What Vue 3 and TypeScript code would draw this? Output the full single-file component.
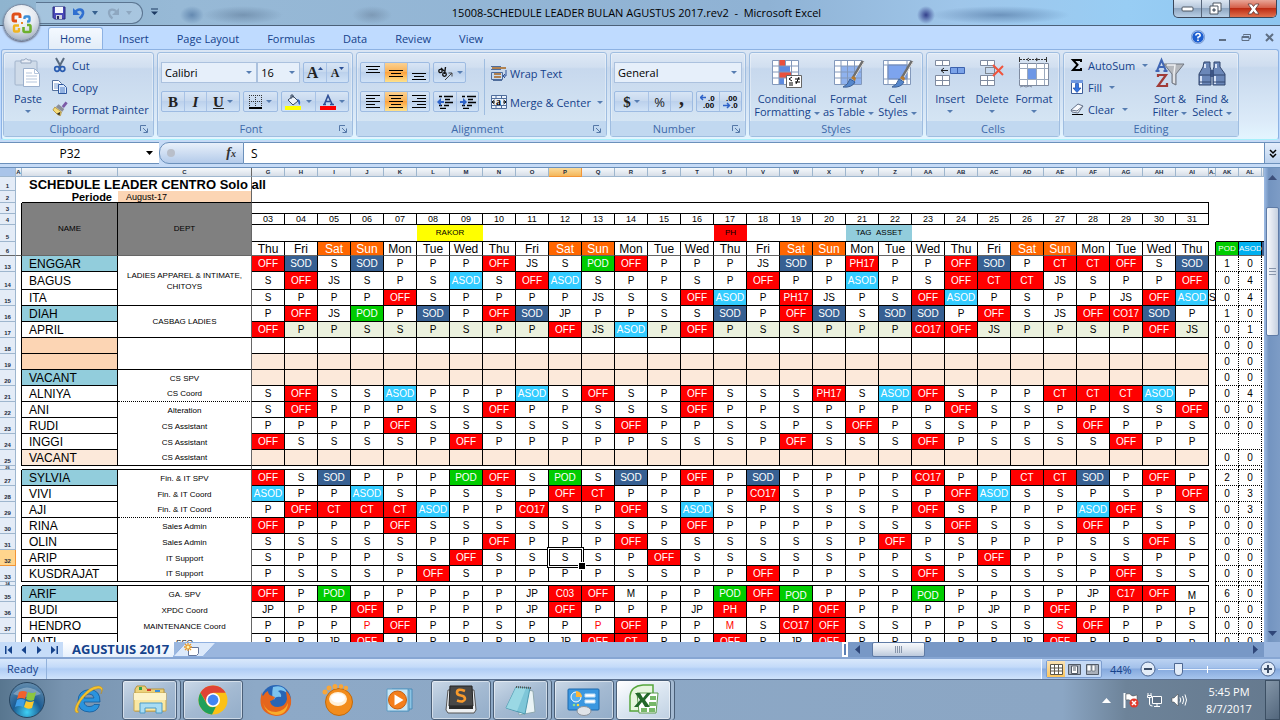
<script setup lang="ts">
import { ref } from 'vue'

interface Dept { text: string; span?: number; line?: 'dotted' | 'solid' }
interface Row {
  n: number
  name?: string
  tone?: 'blue' | 'peach' | 'light' | ''
  dept?: Dept | null
  cells: string
  fill?: 'green' | 'light' | ''
  pod?: string
  asod?: string
  gap?: boolean
  tall?: boolean
}

const columns: string[] = 'G H I J K L M N O P Q R S T U V W X Y Z AA AB AC AD AE AF AG AH AI'.split(' ')
const weekdays: string[] = ['Thu', 'Fri', 'Sat', 'Sun', 'Mon', 'Tue', 'Wed']
const days = columns.map((col, i) => ({
  col,
  date: String(i + 3).padStart(2, '0'),
  day: weekdays[i % 7],
}))
const tabs: string[] = ['Home', 'Insert', 'Page Layout', 'Formulas', 'Data', 'Review', 'View']

const rows: Row[] = [
  { n: 13, name: 'ENGGAR', tone: 'blue', dept: { text: 'LADIES APPAREL & INTIMATE, CHITOYS', span: 3, line: 'solid' }, cells: 'OFF SOD S SOD P P P OFF JS S POD OFF P P P JS SOD P PH17 P P OFF SOD P CT CT OFF S SOD', pod: '1', asod: '0' },
  { n: 14, name: 'BAGUS', dept: null, tall: true, cells: 'S OFF JS S P S ASOD S OFF ASOD S P P S P OFF P P ASOD P S OFF CT CT JS S P P OFF', pod: '0', asod: '4' },
  { n: 15, name: 'ITA', dept: null, cells: 'S P P P OFF S P P P P JS S S OFF ASOD P PH17 JS P S OFF ASOD P S P P JS OFF ASOD', pod: '0', asod: '4' },
  { n: 16, name: 'DIAH', tone: 'blue', dept: { text: 'CASBAG LADIES', span: 2, line: 'solid' }, cells: 'P OFF JS POD P SOD P OFF SOD JP P P S S SOD P OFF SOD S SOD SOD P OFF S JS OFF CO17 SOD P', pod: '1', asod: '0' },
  { n: 17, name: 'APRIL', dept: null, fill: 'green', cells: 'OFF P P S S P S P P OFF JS ASOD P OFF P S S P P P CO17 OFF JS P P S P OFF JS', pod: '0', asod: '1' },
  { n: 18, name: '', tone: 'peach', dept: { text: '', span: 2, line: 'solid' }, cells: '', pod: '0', asod: '0' },
  { n: 19, name: '', tone: 'peach', dept: null, fill: 'light', cells: '', pod: '0', asod: '0' },
  { n: 20, name: 'VACANT', tone: 'blue', dept: { text: 'CS SPV' }, fill: 'light', cells: '', pod: '0', asod: '0' },
  { n: 21, name: 'ALNIYA', dept: { text: 'CS Coord', line: 'dotted' }, cells: 'S OFF S S ASOD P P P ASOD S OFF S P OFF S S S PH17 S ASOD OFF S P P CT CT CT ASOD P', pod: '0', asod: '4' },
  { n: 22, name: 'ANI', dept: { text: 'Alteration' }, cells: 'S OFF P P P S S OFF P P S S S OFF P P S P P P P OFF S S P P S S OFF', pod: '0', asod: '0' },
  { n: 23, name: 'RUDI', dept: { text: 'CS Assistant' }, cells: 'P P P P OFF S S S S S S OFF P P S S P S OFF P S S P P S OFF P P S', pod: '0', asod: '0' },
  { n: 24, name: 'INGGI', dept: { text: 'CS Assistant' }, cells: 'OFF S S S S P OFF P P P P P S S S P OFF S S S OFF P S S S S OFF P P' },
  { n: 25, name: 'VACANT', tone: 'light', dept: { text: 'CS Assistant', line: 'solid' }, fill: 'light', cells: '', pod: '0', asod: '0' },
  { n: 26, gap: true, cells: '' },
  { n: 27, name: 'SYLVIA', tone: 'blue', dept: { text: 'Fin. & IT SPV' }, cells: 'OFF S SOD P P P POD OFF S POD S SOD P OFF P SOD P P P P CO17 P P CT CT SOD P OFF P', pod: '2', asod: '0' },
  { n: 28, name: 'VIVI', dept: { text: 'Fin. & IT Coord' }, cells: 'ASOD P P ASOD S P S S P OFF CT P P P P CO17 S P P S P OFF ASOD S S P S P OFF', pod: '0', asod: '3' },
  { n: 29, name: 'AJI', dept: { text: 'Fin. & IT Coord', line: 'dotted' }, cells: 'P OFF CT CT CT ASOD P P CO17 S P OFF S ASOD S P S S S P OFF S P P P ASOD OFF S S', pod: '0', asod: '3' },
  { n: 30, name: 'RINA', dept: { text: 'Sales Admin' }, cells: 'OFF P P P OFF S S S S S S S P OFF P P P P S S S OFF S S S OFF P S P', pod: '0', asod: '0' },
  { n: 31, name: 'OLIN', dept: { text: 'Sales Admin' }, cells: 'S S S S S P P OFF P P P OFF S S S S S S P OFF P S P P P S S OFF S', pod: '0', asod: '0' },
  { n: 32, name: 'ARIP', dept: { text: 'IT Support' }, cells: 'S P P P S S OFF S S S S P OFF S S S S S P P S P OFF P P S S P P', pod: '0', asod: '0' },
  { n: 33, name: 'KUSDRAJAT', dept: { text: 'IT Support', line: 'solid' }, cells: 'P S S S P OFF S P P P P S S P P OFF P P S S OFF S S S S P OFF S S', pod: '0', asod: '0' },
  { n: 34, gap: true, cells: '' },
  { n: 35, name: 'ARIF', tone: 'blue', dept: { text: 'GA. SPV' }, cells: 'OFF P POD P_ P P P_ P JP C03 OFF M P_ P POD OFF POD_ P P P POD_ P P_ S P JP C17 OFF M_', pod: '6', asod: '0' },
  { n: 36, name: 'BUDI', dept: { text: 'XPDC Coord' }, cells: 'JP P P OFF P P P P JP OFF P P P JP PH P P OFF P P P P JP P OFF P P P P_', pod: '0', asod: '0' },
  { n: 37, name: 'HENDRO', dept: { text: 'MAINTENANCE Coord' }, cells: 'P P P P* OFF P P S P P P* OFF P P M* S CO17 OFF S S P P S S S* OFF P P S', pod: '0', asod: '0' },
  { n: 38, name: 'ANTI', dept: { text: 'SSO' }, cells: 'P P JP OFF P P P P P JP OFF CT P P OFF P JP OFF P P P P P JP OFF P P P P_', pod: '0', asod: '0' },
]

function shifts(row: Row) {
  const codes = row.cells ? row.cells.split(' ') : columns.map(() => '')
  return codes.map((code, i) => {
    const text = code.replace(/[_*]/, '')
    let kind = ''
    if (/^(OFF|CT|PH|C\d|CO)/.test(text)) kind = 'off'
    else if (text === 'SOD') kind = 'sod'
    else if (text === 'ASOD') kind = 'asod'
    else if (text === 'POD') kind = 'pod'
    else if (row.fill) kind = 'fill-' + row.fill
    return {
      text,
      kind,
      low: code.endsWith('_'),
      red: code.endsWith('*'),
      selected: row.n === 32 && columns[i] === 'P',
    }
  })
}

const fontName = ref('Calibri')
const fontSize = ref('16')
const numberFormat = ref('General')
const formula = ref('S')
const zoom = ref(44)
</script>

<template>
  <div class="app">
    <header class="titlebar">
      <div class="qat">
        <button aria-label="Save"><svg width="14" height="14" viewBox="0 0 14 14"><path d="M1 1h12v12H2.500L1 11.500z" fill="#4a49b8" stroke="#2b2a7c" /><path d="M3 1h8v6H3z" fill="#f3f5fd" /><path d="M4 9h6v4H4z" fill="#cfd3dc" /><path d="M5 10h2v3H5z" fill="#26265e" /></svg></button>
        <button aria-label="Undo"><svg width="14" height="14" viewBox="0 0 14 14"><path d="M3 6.500C6 2 11.500 3 11 7.500c-.3 2-1.500 3.500-3.500 5" fill="none" stroke="#2f6fd0" stroke-width="2.600" /><path d="M1 2v7h7z" fill="#2f6fd0" /></svg></button>
        <svg class="tri" width="6" height="4" viewBox="0 0 6 4"><path d="M0 0h6L3 4z" fill="#37608f" /></svg>
        <button aria-label="Redo"><svg width="14" height="14" viewBox="0 0 14 14"><path d="M11 6.500C8 2 2.500 3 3 7.500c.3 2 1.500 3.500 3.500 5" fill="none" stroke="#8ea7c0" stroke-width="2.200" /><path d="M13 2v7H6z" fill="#8ea7c0" /></svg></button>
        <svg class="tri" width="6" height="4" viewBox="0 0 6 4"><path d="M0 0h6L3 4z" fill="#8ea7c0" /></svg>
      </div>
      <button class="qat-more" aria-label="Customize Quick Access Toolbar"><svg width="7" height="8" viewBox="0 0 7 8"><path d="M0 1h7" stroke="#1c3a63" /><path d="M0 3.500h7L3.500 7z" fill="#1c3a63" /></svg></button>
      <h1>15008-SCHEDULE LEADER BULAN AGUSTUS 2017.rev2 &nbsp;-&nbsp; Microsoft Excel</h1>
      <div class="winbtns">
        <button aria-label="Minimize"><svg width="14" height="6" viewBox="0 0 14 6"><rect x="1" y="1" width="11" height="4" rx="1" fill="#fff" stroke="#4c5663" /></svg></button>
        <button aria-label="Restore"><svg width="13" height="13" viewBox="0 0 13 13"><path d="M4 1h8v8H4z" fill="#fff" stroke="#4c5663" /><path d="M1 4h8v8H1z" fill="#fff" stroke="#4c5663" /><path d="M4 7h2v2H4z" fill="#8b9bb0" stroke="#4c5663" /></svg></button>
        <button class="close" aria-label="Close"><svg width="13" height="12" viewBox="0 0 13 12"><path d="M1 1h3.500l2 2.500L8.500 1H12L8.500 6 12 11H8.500l-2-2.500-2 2.500H1l3.500-5z" fill="#fff" stroke="#5a3a3a" stroke-width=".8" /></svg></button>
      </div>
      <button class="orb" aria-label="Office Button">
        <svg width="24" height="24" viewBox="0 0 24 24" fill="none" stroke-width="3">
          <path d="M10 7V4.500Q10 3 8.500 3H5Q3 3 3 5v3.500Q3 10 4.500 10H7" stroke="#e0501a" />
          <path d="M14.500 8V6.500q0-1 1-1h3q1 0 1 1v3q0 1-1 1H17" stroke="#3c8fd8" stroke-width="2.400" />
          <path d="M9 14.500H5q-1 0-1 1v4q0 1 1 1h3q1 0 1-1V17" stroke="#f0b420" stroke-width="2.400" />
          <path d="M13.500 16v3.500q0 1.500 1.500 1.500h4q1.500 0 1.500-1.500v-4q0-1.500-1.500-1.500H17" stroke="#6cb02c" stroke-width="2.600" />
          <path d="M11 11h2v2h-2z" fill="#e8882a" /></svg>
      </button>
    </header>

    <nav class="tabs">
      <button v-for="(tab, i) in tabs" :key="tab" :class="{ active: i === 0 }">{{ tab }}</button>
      <div class="mdi">
        <button aria-label="Help"><svg width="14" height="14" viewBox="0 0 14 14"><circle cx="7" cy="7" r="6.300" fill="#1d5fd0" stroke="#eaf3ff" /><circle cx="7" cy="7" r="6.700" fill="none" stroke="#4a74b8" stroke-width=".6" /><path d="M4.800 5.500Q5 3.500 7 3.500t2.200 1.700Q9.200 6.500 7 7.300v1.200M7 9.500v1.500" fill="none" stroke="#fff" stroke-width="1.600" /></svg></button>
        <button aria-label="Minimize workbook"><svg width="8" height="9" viewBox="0 0 8 9"><path d="M0 7h7" stroke="#5f6f84" stroke-width="2" /></svg></button>
        <button aria-label="Restore workbook"><svg width="10" height="9" viewBox="0 0 10 9"><path d="M2.500 2.500v-1h7v4H8M1 3.500h7v4H1z" fill="none" stroke="#5f6f84" /><path d="M1 4h7" stroke="#5f6f84" stroke-width="2" /></svg></button>
        <button aria-label="Close workbook"><svg width="9" height="9" viewBox="0 0 9 9"><path d="M1 1l7 7M8 1L1 8" stroke="#5f6f84" stroke-width="2" /></svg></button>
      </div>
    </nav>

    <section class="ribbon" aria-label="Ribbon">
      <div class="group g-clip">
        <div class="gbody">
          <button class="big paste">
            <svg width="28" height="32" viewBox="0 0 28 32"><rect x="1" y="4" width="22" height="24" rx="1" fill="#cfdbe9" stroke="#a2b4cc" /><path d="M7 6V3h3q2-3 4 0h3v3z" fill="#e9eef6" stroke="#93a5be" /><path d="M9.500 11.500h11l5 5v13h-16z" fill="#fff" stroke="#9bb0cd" /><path d="M20.500 11.500v5h5M12 19h11M12 22h11M12 25h11M12 16h6" fill="none" stroke="#b4c5dc" /></svg>
            <span>Paste</span><i class="dd"></i>
          </button>
          <div class="stack">
            <button class="small"><svg width="16" height="16" viewBox="0 0 16 16"><path d="M4 1l5 9M12 1L7 10" stroke="#596b80" stroke-width="2" /><circle cx="5" cy="12" r="2.300" fill="none" stroke="#2a5cb0" stroke-width="1.700" /><circle cx="10.500" cy="12" r="2.300" fill="none" stroke="#2a5cb0" stroke-width="1.700" /></svg>Cut</button>
            <button class="small"><svg width="16" height="16" viewBox="0 0 16 16"><path d="M.5 1.500h6l3 3v7h-9z" fill="#fff" stroke="#54719e" /><path d="M2 5h5M2 7h5M2 9h5" stroke="#7d9fd2" /><path d="M6.500 5.500h5l3 3v6h-8z" fill="#dce9fb" stroke="#2e58a0" /><path d="M8 9h5M8 11h5M8 13h5" stroke="#4b7cc8" /></svg>Copy</button>
            <button class="small"><svg width="16" height="16" viewBox="0 0 17 16"><path d="M15.500 1l-4 5" stroke="#7b5aa6" stroke-width="3" /><path d="M7 3l6 5-2 3-7-5z" fill="#8b8f9a" /><path d="M3 6l7 5-1 4-3-1-5-5z" fill="#f5dc7a" stroke="#a8862e" stroke-width=".8" /><path d="M9 11l-1 4-3-2z" fill="#3c3524" /></svg>Format Painter</button>
          </div>
        </div>
        <div class="glabel"><span>Clipboard</span><svg width="8" height="8" viewBox="0 0 8 8"><path d="M.5 6V.5H6M3 3l4 4M7.500 3.500v4h-4" fill="none" stroke="#5578a8" /></svg></div>
      </div>

      <div class="group g-font">
        <div class="gbody rows2">
          <div class="line">
            <label class="combo c-font"><select v-model="fontName" aria-label="Font"><option>Calibri</option></select><i class="dd"></i></label>
            <label class="combo c-size"><select v-model="fontSize" aria-label="Font size"><option>16</option></select><i class="dd"></i></label>
            <div class="bar push">
              <button class="w22" aria-label="Grow Font"><b class="serif s16">A</b><svg class="sup" width="5" height="3" viewBox="0 0 5 3"><path d="M0 3h5L2.500 0z" fill="#2b4f96" /></svg></button>
              <button class="w22" aria-label="Shrink Font"><b class="serif s12">A</b><svg class="sup" width="5" height="3" viewBox="0 0 5 3"><path d="M0 0h5L2.500 3z" fill="#2b4f96" /></svg></button>
            </div>
          </div>
          <div class="line spread">
            <div class="bar">
              <button class="w22"><b class="serif s14">B</b></button>
              <button class="w22"><b class="serif s14"><em>I</em></b></button>
              <button class="w34"><b class="serif s14"><u>U</u></b><i class="dd"></i></button>
            </div>
            <div class="bar">
              <button class="w34" aria-label="Borders"><svg width="14" height="14" viewBox="0 0 14 14"><path d="M.5 0v12M6.500 0v12M12.500 0v12M0 .5h13M0 6.500h13" stroke="#333" stroke-dasharray="1 1" /><path d="M0 13h13" stroke="#000" stroke-width="2" /></svg><i class="dd"></i></button>
            </div>
            <div class="bar">
              <button class="w34" aria-label="Fill Color"><svg width="18" height="16" viewBox="0 0 18 16"><path d="M3 6l5-4 5 5-5 4z" fill="#eef4fc" stroke="#3a4a63" /><path d="M6 5V1h2v3" fill="none" stroke="#3a4a63" /><path d="M12 5q4 0 3 6-2-1-2-4z" fill="#2f62c0" /><path d="M0 12h16v4H0z" fill="#ff0" /></svg><i class="dd"></i></button>
              <button class="w34" aria-label="Font Color"><svg width="16" height="16" viewBox="0 0 16 16"><path d="M3 10.500h3M10 10.500h4M4.500 10L8 1.500l4 8.500M5.500 7.500h4.500" fill="none" stroke="#2f4f95" stroke-width="1.600" /><path d="M0 12h16v4H0z" fill="#f00" /></svg><i class="dd"></i></button>
            </div>
          </div>
        </div>
        <div class="glabel"><span>Font</span><svg width="8" height="8" viewBox="0 0 8 8"><path d="M.5 6V.5H6M3 3l4 4M7.500 3.500v4h-4" fill="none" stroke="#5578a8" /></svg></div>
      </div>

      <div class="group g-align">
        <div class="gbody">
          <div class="half">
            <div class="line">
              <div class="bar">
                <button class="w23" aria-label="Top Align"><svg width="14" height="14" viewBox="0 0 14 14"><path d="M0 .5h14M2 3.500h10M0 6.500h14" stroke="#000" /></svg></button>
                <button class="w23 on" aria-label="Middle Align"><svg width="14" height="14" viewBox="0 0 14 14"><path d="M0 4.500h14M2 7.500h10M0 10.500h14" stroke="#000" /></svg></button>
                <button class="w22" aria-label="Bottom Align"><svg width="14" height="14" viewBox="0 0 14 14"><path d="M0 7.500h14M2 10.500h10M0 13.500h14" stroke="#000" /></svg></button>
              </div>
              <div class="bar"><button class="w31" aria-label="Orientation"><svg width="17" height="16" viewBox="0 0 17 16"><circle cx="3.500" cy="6" r="1.700" fill="none" stroke="#111" stroke-width="1.300" /><path d="M4 3l3 3M8.500 2l-1 7" stroke="#111" stroke-width="1.400" /><circle cx="7.500" cy="9.500" r="1.800" fill="none" stroke="#111" stroke-width="1.300" /><path d="M8 15l7-7M15 11.500V8h-3.500" fill="none" stroke="#444" /></svg><i class="dd"></i></button></div>
            </div>
            <div class="line">
              <div class="bar">
                <button class="w23" aria-label="Align Left"><svg width="14" height="13" viewBox="0 0 14 13"><path d="M0 .5h14M0 3.500h9M0 6.500h14M0 9.500h9M0 12.500h14" stroke="#000" /></svg></button>
                <button class="w23 on" aria-label="Center"><svg width="14" height="13" viewBox="0 0 14 13"><path d="M0 .5h14M2 3.500h10M0 6.500h14M2 9.500h10M0 12.500h14" stroke="#000" /></svg></button>
                <button class="w22" aria-label="Align Right"><svg width="14" height="13" viewBox="0 0 14 13"><path d="M0 .5h14M5 3.500h9M0 6.500h14M5 9.500h9M0 12.500h14" stroke="#000" /></svg></button>
              </div>
              <div class="bar">
                <button class="w22" aria-label="Decrease Indent"><svg width="16" height="14" viewBox="0 0 16 14"><path d="M7 1.500h9M8 4.500h5M8 7.500h8M7 10.500h5M2 1.500h3M2 10.500h3M3 13.500h6" stroke="#000" stroke-width="1.500" /><path d="M7 6H4V3L0 7l4 4V8h3z" fill="#2e62c8" /></svg></button>
                <button class="w22" aria-label="Increase Indent"><svg width="16" height="14" viewBox="0 0 16 14"><path d="M7 1.500h9M8 4.500h5M8 7.500h8M7 10.500h5M2 1.500h3M2 10.500h3M3 13.500h6" stroke="#000" stroke-width="1.500" /><path d="M0 6h3V3l4 4-4 4V8H0z" fill="#2e62c8" /></svg></button>
              </div>
            </div>
          </div>
          <div class="vsep"></div>
          <div class="half wide">
            <button class="small"><svg width="16" height="16" viewBox="0 0 16 16"><path d="M0 1.500h10M2 15.500h9M0 4.500h10" stroke="#4f6d9c" /><path d="M1 3h14M3 9h7M3 12h7" stroke="#a8641c" stroke-width="1.500" /><path d="M.5 7.500h11v7H.5z" fill="none" stroke="#4f6d9c" /><path d="M15 5v6h-2M14 9l-2 2 2 2" fill="none" stroke="#2b4f96" /></svg>Wrap Text</button>
            <button class="small"><svg width="16" height="14" viewBox="0 0 16 14"><path d="M.5.500h15v13H.5zM5 .5v3M10.500.500v3M5 10.500v3M10.500 10.500v3M.5 3.500h15M.5 10.500h15" fill="#eaf2fc" stroke="#4f6d9c" /><path d="M3.500 5L1 7l2.500 2M12.500 5L15 7l-2.500 2M1 7h3M12 7h3" fill="none" stroke="#000" /><text x="5" y="10" font-family="Liberation Serif" font-weight="bold" font-size="10">a</text></svg>Merge &amp; Center<i class="dd"></i></button>
          </div>
        </div>
        <div class="glabel"><span>Alignment</span><svg width="8" height="8" viewBox="0 0 8 8"><path d="M.5 6V.5H6M3 3l4 4M7.500 3.500v4h-4" fill="none" stroke="#5578a8" /></svg></div>
      </div>

      <div class="group g-num">
        <div class="gbody rows2">
          <label class="combo c-num"><select v-model="numberFormat" aria-label="Number format"><option>General</option></select><i class="dd"></i></label>
          <div class="line spread">
            <div class="bar">
              <button class="w34"><b class="serif s14">$</b><i class="dd"></i></button>
              <button class="w22"><span class="s13">%</span></button>
              <button class="w22"><b class="serif s18">,</b></button>
            </div>
            <div class="bar">
              <button class="w22" aria-label="Increase Decimal"><svg width="16" height="15" viewBox="0 0 16 15"><path d="M0 3.500h6M3 1L.5 3.500 3 6" fill="none" stroke="#2e62c8" stroke-width="1.500" /><text x="8" y="7" font-family="Liberation Sans" font-weight="bold" font-size="8">.0</text><text x="3" y="14" font-family="Liberation Sans" font-weight="bold" font-size="8">.00</text></svg></button>
              <button class="w22" aria-label="Decrease Decimal"><svg width="16" height="15" viewBox="0 0 16 15"><path d="M0 11.500h6M4 9l2.500 2.500L4 14" fill="none" stroke="#2e62c8" stroke-width="1.500" /><text x="3" y="7" font-family="Liberation Sans" font-weight="bold" font-size="8">.00</text><text x="8" y="14" font-family="Liberation Sans" font-weight="bold" font-size="8">.0</text></svg></button>
            </div>
          </div>
        </div>
        <div class="glabel"><span>Number</span><svg width="8" height="8" viewBox="0 0 8 8"><path d="M.5 6V.5H6M3 3l4 4M7.500 3.500v4h-4" fill="none" stroke="#5578a8" /></svg></div>
      </div>

      <div class="group g-styles">
        <div class="gbody">
          <button class="big b68">
            <svg width="32" height="32" viewBox="0 0 32 32"><path d="M1.500 3.500h26v24h-26z" fill="#fff" stroke="#8298bb" /><path d="M8 3h7v6H8zM8 15h12v6H8z" fill="#e8503c" /><path d="M8 9h11v6H8zM8 21h5v6H8z" fill="#5c8ae0" /><path d="M8 3v24M14.500 3v6M20.500 3v24M1 9h26M1 15h26M1 21h26" stroke="#8298bb" /><path d="M15.500 18.500h15v12h-15z" fill="#fff" stroke="#666" /><path d="M21 20l-3 2 3 2M18 26h4M18 28h4M24 22h5M24 25h5M28 20l-3 7" fill="none" stroke="#000" /></svg>
            <span>Conditional</span><span>Formatting<i class="dd"></i></span>
          </button>
          <button class="big b54">
            <svg width="32" height="32" viewBox="0 0 32 32"><path d="M1.500 3.500h27v24h-27z" fill="#fff" stroke="#8298bb" /><path d="M8 9h20v18H8z" fill="#8fb2ee" /><path d="M8 3v24M14.500 3v24M21.500 3v24M1 9h27M1 15h27M1 21h27" stroke="#8298bb" /><path d="M30 4L20 21" stroke="#6f6f6f" stroke-width="3" /><path d="M31 5L22 20" stroke="#e2e2e2" /><path d="M17 22l5 3q-3 6-12 5 5-2 7-8z" fill="#5587cc" stroke="#3b5f96" /><path d="M18 21l4 3 1-3-3-2z" fill="#b97b2c" /></svg>
            <span>Format</span><span>as Table<i class="dd"></i></span>
          </button>
          <button class="big b44">
            <svg width="32" height="32" viewBox="0 0 32 32"><path d="M1.500 3.500h27v24h-27z" fill="#fff" stroke="#8298bb" /><path d="M6 8h19v14H6z" fill="#7da4ee" stroke="#5c7fc8" /><path d="M6 3v24M25 3v24M1 8h27M1 22h27" stroke="#8298bb" /><path d="M30 4L20 21" stroke="#6f6f6f" stroke-width="3" /><path d="M31 5L22 20" stroke="#e2e2e2" /><path d="M17 22l5 3q-3 6-12 5 5-2 7-8z" fill="#5587cc" stroke="#3b5f96" /><path d="M18 21l4 3 1-3-3-2z" fill="#b97b2c" /></svg>
            <span>Cell</span><span>Styles<i class="dd"></i></span>
          </button>
        </div>
        <div class="glabel"><span>Styles</span></div>
      </div>

      <div class="group g-cells">
        <div class="gbody snug">
          <button class="big b42">
            <svg width="32" height="32" viewBox="0 0 32 32"><path d="M1.500 3.500h14v5h-14zM8.500 3.500v5M1.500 18.500h14v10h-14zM8.500 18.500v10M1.500 23.500h14" fill="#fff" stroke="#7f8ba0" /><path d="M16.500 10.500h14v6h-14zM23.500 10.500v6" fill="#7ba3e8" stroke="#3d62ae" /><path d="M7 13.500h7M10 11l-3 2.500 3 2.500" fill="none" stroke="#222" /></svg>
            <span>Insert</span><i class="dd"></i>
          </button>
          <button class="big b42">
            <svg width="32" height="32" viewBox="0 0 32 32"><path d="M4.500 3.500h14v5h-14zM11.500 3.500v5M4.500 18.500h14v10h-14zM11.500 18.500v10M4.500 23.500h14" fill="#fff" stroke="#7f8ba0" /><path d="M9.500 10.500h9v6h-9z" fill="none" stroke="#333" stroke-dasharray="1 1" /><path d="M17 8l10 10M27 9L17 19" stroke="#f0543c" stroke-width="2" /></svg>
            <span>Delete</span><i class="dd"></i>
          </button>
          <button class="big b42">
            <svg width="32" height="32" viewBox="0 0 32 32"><path d="M1.500 6.500h29v22h-29z" fill="#fff" stroke="#7f8ba0" /><path d="M9.500 6v22M18.500 6v22M26.500 6v22M1 11.500h29M1 22.500h29" stroke="#9aa8bc" /><path d="M10 12h8v10h-8z" fill="#6d97e6" /><path d="M2 2.500h26" stroke="#333" stroke-dasharray="2 1" /><path d="M1.500 0v5M28.500 0v5M11 1L9 2.500 11 4M18 1l2 1.500L18 4" fill="none" stroke="#333" /><path d="M2 30q4-2 6 0 4-2 6 0" fill="none" stroke="#7f8ba0" /></svg>
            <span>Format</span><i class="dd"></i>
          </button>
        </div>
        <div class="glabel"><span>Cells</span></div>
      </div>

      <div class="group g-edit">
        <div class="gbody">
          <div class="stack edit">
            <button class="small"><svg width="14" height="14" viewBox="0 0 14 14"><path d="M11 4V2H3l4.500 4.800L3 12h8v-2" fill="none" stroke="#000" stroke-width="2" /></svg>AutoSum<i class="dd"></i></button>
            <button class="small"><svg width="14" height="16" viewBox="0 0 14 16"><path d="M1.500 1.500h11v13h-11z" fill="#fff" stroke="#3c5c98" /><path d="M1 1h12v3H1z" fill="#6f98e0" /><path d="M5.500 4.500h3V9H11l-4 4.500L3 9h2.500z" fill="#3474e0" stroke="#1b4aa8" stroke-width=".7" /></svg>Fill<i class="dd"></i></button>
            <button class="small"><svg width="14" height="14" viewBox="0 0 14 14"><path d="M8 2l5 2-5 7-6-1-1-2z" fill="#f7f9fd" stroke="#66748c" /><path d="M1 8l6 1 6-5" fill="none" stroke="#66748c" /><path d="M2 12.500h11" stroke="#000" /></svg>Clear<i class="dd"></i></button>
          </div>
          <button class="big b42">
            <svg width="32" height="32" viewBox="0 0 32 32"><path d="M3 14L7.500 3 12 14M4.500 10h6M1.500 14h4M9.500 14h4" fill="none" stroke="#4066b4" stroke-width="2" /><path d="M4 18h8L4 29h9v-3M4 20v-3" fill="none" stroke="#a03c38" stroke-width="2.200" /><path d="M10 7h20l-8 10v11l-4-2V17z" fill="#b5b8bd" stroke="#707681" /><path d="M13 8h8l-1 8v10" fill="none" stroke="#eef0f3" stroke-width="1.500" /></svg>
            <span>Sort &amp;</span><span>Filter<i class="dd"></i></span>
          </button>
          <button class="big b42">
            <svg width="32" height="32" viewBox="0 0 32 32"><path d="M8 5h6v5l1 3v15H3V17l4-7zM18 5h6v5l5 7v11H17V13l1-3z" fill="#6b87b8" stroke="#33476e" /><path d="M14 13h4v7h-4z" fill="#3c5484" /><path d="M5 19v8M19 19v8M9 7v4M20 7v4" stroke="#d9e4f7" stroke-width="2" /><path d="M3 18h12M17 18h12M3 25h12M17 25h12" stroke="#33476e" /></svg>
            <span>Find &amp;</span><span>Select<i class="dd"></i></span>
          </button>
        </div>
        <div class="glabel"><span>Editing</span></div>
      </div>
    </section>

    <section class="formula">
      <button class="namebox"><span>P32</span><svg width="7" height="4" viewBox="0 0 7 4"><path d="M0 0h7L3.500 4z" /></svg></button>
      <div class="fx"><span class="knob"></span><em>f<small>x</small></em></div>
      <input v-model="formula" aria-label="Formula" />
      <button class="expand" aria-label="Expand formula bar"><svg width="8" height="9" viewBox="0 0 8 9"><path d="M1 1l3 3 3-3M1 5l3 3 3-3" fill="none" stroke="#000" stroke-width="1.500" /></svg></button>
    </section>

    <main class="workspace">
      <div class="sheet">
        <table>
          <colgroup>
            <col class="k-hdr" /><col class="k-a" /><col class="k-b" /><col class="k-c" />
            <col v-for="d in days" :key="d.col" class="k-day" />
            <col class="k-aj" /><col class="k-sum" /><col class="k-sum" /><col />
          </colgroup>
          <thead>
            <tr class="letters">
              <th class="corner"></th><th>A</th><th>B</th><th class="frz">C</th>
              <th v-for="d in days" :key="d.col" :class="{ hot: d.col === 'P' }">{{ d.col }}</th>
              <th>A.</th><th>AK</th><th>AL</th><th></th>
            </tr>
          </thead>
          <tbody>
            <tr class="h14">
              <th>1</th><td></td><td class="title">SCHEDULE LEADER CENTRO Solo all</td><td class="frz"></td><td colspan="33"></td>
            </tr>
            <tr class="h12">
              <th>2</th><td></td><td class="periode bl">Periode</td><td class="month bl frz">August-17</td><td colspan="29" class="bl"></td><td colspan="4"></td>
            </tr>
            <tr class="h11">
              <th>3</th><td class="br"></td><td rowspan="4" class="head br cut">NAME</td><td rowspan="4" class="head frz cut">DEPT</td><td colspan="29" class="bl br"></td><td colspan="4"></td>
            </tr>
            <tr class="h11">
              <th>4</th><td class="br"></td><td v-for="d in days" :key="d.col" class="date bl br">{{ d.date }}</td><td colspan="4"></td>
            </tr>
            <tr class="h17">
              <th>5</th><td class="br"></td><td colspan="5" class="bl"></td><td colspan="2" class="note rakor bl">RAKOR</td><td colspan="7" class="bl"></td><td class="note ph bl">PH</td><td colspan="3" class="bl"></td><td colspan="2" class="note tag bl">TAG &nbsp;ASSET</td><td colspan="9" class="bl"></td><td></td><td colspan="3" class="bl"></td>
            </tr>
            <tr class="h14 freeze">
              <th>6</th><td class="br"></td><td v-for="d in days" :key="d.col" class="day br" :class="{ weekend: d.day[0] === 'S' }">{{ d.day }}</td><td class="br"></td><td class="sumhead green br">POD</td><td class="sumhead azure br">ASOD</td><td class="navy"></td>
            </tr>
            <template v-for="row in rows" :key="row.n">
              <tr v-if="row.gap" class="gap">
                <th><span>{{ row.n }}</span></th><td></td><td class="bl"></td><td class="bl frz"></td><td colspan="29" class="bl"></td><td class="br"></td><td class="dot"></td><td class="dot"></td><td></td>
              </tr>
              <tr v-else :class="row.tall ? 'h18' : 'h16'">
                <th :class="{ hot: row.n === 32 }">{{ row.n }}</th>
                <td class="br"></td>
                <td class="name bl br" :class="row.tone">{{ row.name }}</td>
                <td v-if="row.dept" class="dept frz" :class="row.dept.line" :rowspan="row.dept.span || 1">{{ row.dept.text }}</td>
                <td v-for="(s, i) in shifts(row)" :key="i" class="shift bl br" :class="[s.kind, { low: s.low, red: s.red, sel: s.selected }]">{{ s.text }}<span v-if="s.selected" class="cursor"></span></td>
                <td class="br" :class="{ spill: row.n === 15, bl: row.n === 14 || row.n === 15 }"><span v-if="row.n === 15">SO</span></td>
                <td class="dot">{{ row.pod }}</td><td class="dot">{{ row.asod }}</td><td></td>
              </tr>
            </template>
          </tbody>
        </table>
      </div>
      <div class="vscroll">
        <button aria-label="Scroll up"><svg width="9" height="5" viewBox="0 0 9 5"><path d="M0 5h9L4.500 0z" fill="#3d4f7a" /></svg></button>
        <div class="vtrack"><div class="vthumb"></div></div>
        <button aria-label="Scroll down"><svg width="9" height="5" viewBox="0 0 9 5"><path d="M0 0h9L4.500 5z" fill="#2f4678" /></svg></button>
      </div>
    </main>

    <div class="sheetbar">
      <div class="navs">
        <button aria-label="First sheet"><svg width="8" height="8" viewBox="0 0 8 8"><path d="M0 0h1.500v8H0zM7 0v8L2.500 4z" /></svg></button>
        <button aria-label="Previous sheet"><svg width="8" height="8" viewBox="0 0 8 8"><path d="M6 0v8L1.500 4z" /></svg></button>
        <button aria-label="Next sheet"><svg width="8" height="8" viewBox="0 0 8 8"><path d="M2 0v8l4.500-4z" /></svg></button>
        <button aria-label="Last sheet"><svg width="8" height="8" viewBox="0 0 8 8"><path d="M6.500 0H8v8H6.500zM1 0v8l4.500-4z" /></svg></button>
      </div>
      <button class="sheettab"><span>AGUSTUIS 2017</span></button>
      <button class="newtab" aria-label="Insert Worksheet"><svg width="44" height="15" viewBox="0 0 44 15"><path d="M0 14.500L13 .5h30L30 14.500z" fill="#dce9fa" stroke="#8fb0e0" /><path d="M15.500 5.500h10v6l-2 2h-8z" fill="#fff" stroke="#66779b" /><path d="M15 1v8M11 5h8M12 2l6 6M18 2l-6 6" stroke="#e89a2a" stroke-width="1.300" /><circle cx="15" cy="5" r="1.500" fill="#fff3b0" /></svg></button>
      <div class="fillbar"></div>
      <div class="hscroll">
        <span class="split"></span>
        <button aria-label="Scroll left"><svg width="5" height="9" viewBox="0 0 5 9"><path d="M5 0v9L0 4.500z" fill="#2f4678" /></svg></button>
        <div class="htrack"><div class="hthumb"></div></div>
        <button aria-label="Scroll right"><svg width="5" height="9" viewBox="0 0 5 9"><path d="M0 0v9l5-4.500z" fill="#2f4678" /></svg></button>
      </div>
    </div>

    <footer class="status">
      <span class="ready">Ready</span>
      <div class="statusfill"></div>
      <div class="zoombox">
        <div class="views">
          <button class="on" aria-label="Normal"><svg width="13" height="11" viewBox="0 0 13 11"><path d="M.5.500h12v10H.5zM4.500.500v10M8.500.500v10M.5 4h12M.5 7h12" fill="#fff" stroke="#5c5648" /></svg></button>
          <button aria-label="Page Layout"><svg width="13" height="11" viewBox="0 0 13 11"><path d="M.5.500h12v10H.5z" fill="#a9b0bb" stroke="#525a66" /><path d="M3.500 2h6v7.500h-6z" fill="#fff" stroke="#525a66" /><path d="M5 4h3M5 6h3" stroke="#525a66" /></svg></button>
          <button aria-label="Page Break Preview"><svg width="13" height="11" viewBox="0 0 13 11"><path d="M.5.500h12v10H.5z" fill="#a9b0bb" stroke="#525a66" /><path d="M1 1h4v6H1zM6 1h3v6H6z" fill="#fff" stroke="#525a66" stroke-width=".6" /></svg></button>
        </div>
        <button class="pct">44%</button>
        <button class="round" aria-label="Zoom out"><svg width="16" height="16" viewBox="0 0 16 16"><circle cx="8" cy="8" r="7" fill="#e3ecf8" stroke="#4d6792" /><path d="M4 8h8" stroke="#3b4c66" stroke-width="2" /></svg></button>
        <input v-model="zoom" type="range" min="10" max="200" aria-label="Zoom" />
        <button class="round" aria-label="Zoom in"><svg width="16" height="16" viewBox="0 0 16 16"><circle cx="8" cy="8" r="7" fill="#e3ecf8" stroke="#4d6792" /><path d="M4 8h8M8 4v8" stroke="#3b4c66" stroke-width="2" /></svg></button>
      </div>
    </footer>

    <nav class="taskbar">
      <button class="t-start" aria-label="Start"><svg width="38" height="38" viewBox="0 0 38 38"><defs><radialGradient id="orbg" cx=".5" cy=".85" r=".8"><stop offset="0" stop-color="#3fd0f5" /><stop offset=".5" stop-color="#1c5c93" /><stop offset="1" stop-color="#5d88ab" /></radialGradient></defs><circle cx="19" cy="19" r="17.500" fill="url(#orbg)" stroke="#27445f" /><path d="M5 13q14-13 28 0-14 6-28 0z" fill="#fff" opacity=".3" /><path d="M11 11q4-2 8 0l-2 7q-4-2-8 0z" fill="#f2622c" /><path d="M20 11q4 2 8 0l-2 8q-4 2-8-1z" fill="#8cc63f" /><path d="M9 19q4-2 8 0l-2 7q-4-2-8 0z" fill="#3f9ee8" /><path d="M18 20q4 2 8 0l-2 7q-4 2-8-1z" fill="#fcc92e" /></svg></button>
      <button class="t-plain" aria-label="Internet Explorer"><svg width="32" height="32" viewBox="0 0 32 32"><path d="M28 18H12q1 5 6 4.500 3 0 4-2h5.500q-2 7.500-10 7.500Q6 27.500 6 17T17.500 5.500Q28.500 6 28 18zM12 14h10Q21.500 10 17 10T12 14z" fill="#2a93dd" stroke="#125a9c" stroke-width=".8" /><path d="M5 29Q-1 27 9 13 19 1 27 2q6 1 2 8 2-6-3-5.500Q17 6 9 17q-6 10-2 11z" fill="#f5c22c" stroke="#b58416" stroke-width=".4" /></svg></button>
      <button class="t-run stacked" aria-label="Windows Explorer"><svg width="34" height="32" viewBox="0 0 34 32"><path d="M2 5l2-3h8l2 3h17v22H2z" fill="#ecd27a" stroke="#b3923c" /><path d="M6 3h3v3H6z" fill="#31a347" /><path d="M14 5h4v2h-4z" fill="#d23b2a" /><path d="M22 6h5v2h-5z" fill="#3d8fd8" /><path d="M1 9h32v18H1z" fill="#fae8a4" stroke="#c7a650" /><path d="M1 9h32v7H1z" fill="#fdf3c8" /><path d="M7 29V19h22v10h-6v-5H12v5z" fill="#a8dcf3" stroke="#4b9bc9" /></svg></button>
      <button class="t-run" aria-label="Google Chrome"><svg width="32" height="32" viewBox="0 0 32 32"><circle cx="16" cy="16" r="14.500" fill="#fbc116" /><path d="M28.600 8.800H16L10 19 3.400 8.800A14.500 14.500 0 0 1 28.600 8.800z" fill="#df4335" /><path d="M3.400 8.800L10 20q3 5 9 2.500L15 30.500A14.500 14.500 0 0 1 3.400 8.800z" fill="#1fa05a" /><circle cx="16" cy="16" r="7" fill="#fff" /><circle cx="16" cy="16" r="5.400" fill="#4285f4" /></svg></button>
      <button class="t-plain" aria-label="Firefox"><svg width="34" height="34" viewBox="0 0 34 34"><circle cx="17" cy="17" r="15" fill="#2865b5" /><path d="M14 4q11-3 14 6-5-4-9-2 4 3 3 6-6-1-7 3-3-4-1-13z" fill="#7cc3ee" /><path d="M3 9q0 3 1 4 2-4 5-5 0 4 4 5l3 1q-1 3-5 4 1 6 8 6 8-1 9-8l-1-8q6 4 5 13-3 12-15 12Q1 31 1.500 17 2 12 3 9z" fill="#e5651c" /><path d="M4 20q3 9 13 9 9-1 12-9-1 12-12 12Q7 31 4 20z" fill="#f9ad2a" /></svg></button>
      <button class="t-plain" aria-label="GOM Player"><svg width="32" height="32" viewBox="0 0 32 32"><circle cx="17" cy="18" r="13.500" fill="#f28c1c" stroke="#c26a0c" /><ellipse cx="16" cy="15" rx="9" ry="7" fill="#fff0d8" /><ellipse cx="16" cy="14" rx="7" ry="4.500" fill="#fff" /><circle cx="3" cy="8" r="2.500" fill="#f8a63a" /><circle cx="7" cy="4" r="2.500" fill="#f8a63a" /><circle cx="13" cy="2.500" r="2.500" fill="#f8a63a" /><circle cx="19" cy="2.500" r="2.300" fill="#f8a63a" /><circle cx="24" cy="4" r="2.200" fill="#f8a63a" /></svg></button>
      <button class="t-plain" aria-label="Windows Media Player"><svg width="28" height="28" viewBox="0 0 28 28"><path d="M6 3h20v20H6z" fill="#8cc4e4" stroke="#4a8cb8" /><path d="M4 4h19v21H4z" fill="#a9d6ee" stroke="#4a8cb8" /><path d="M1 3h21v22H1z" fill="#c8e6f5" stroke="#5f9cc4" /><circle cx="11.500" cy="14" r="9" fill="#f47e1c" stroke="#c65c0c" /><path d="M8.500 8.500l9 5.500-9 5.500z" fill="#fff" /></svg></button>
      <button class="t-run" aria-label="Sublime Text"><svg width="32" height="32" viewBox="0 0 32 32"><path d="M3 6h26l2 20-2 3H3l-2-3z" fill="#eceff2" stroke="#555" /><path d="M5 2h22l1 20H4z" fill="#484848" stroke="#222" /><path d="M4 22h24v3H4z" fill="#2a2a2a" /><path d="M20 7q-8-3-8 1.500 0 2.500 4 3t4 3.500q-1 4-8 1.500" fill="none" stroke="#f89a2c" stroke-width="2.600" /></svg></button>
      <button class="t-run stacked" aria-label="Notepad"><svg width="32" height="32" viewBox="0 0 32 32"><path d="M12 4l16 3 2 21-16 3z" fill="#e9f3f5" stroke="#8fa8b0" /><path d="M11 3l14 1-5 26L1 24z" fill="#7ec6d8" stroke="#4d98ae" /><path d="M11 3l10 1-9 23-11-3z" fill="#a7dfea" opacity=".7" /><path d="M11 3l15 1" stroke="#555" stroke-width="2" stroke-dasharray="1 1" /></svg></button>
      <button class="t-run" aria-label="Control Panel"><svg width="34" height="32" viewBox="0 0 34 32"><rect x="1" y="5" width="31" height="21" rx="1" fill="#3a97e0" stroke="#1d68ac" /><circle cx="9" cy="13" r="5" fill="#58b0ee" stroke="#fff" /><path d="M9 13V7a6 6 0 0 1 6 6z" fill="#ffb636" /><path d="M18 10h10v3H18zM18 16h10v3H18z" fill="#fff" stroke="#bfe1fa" /><circle cx="7" cy="21" r="1.300" fill="#8de08a" /><circle cx="11" cy="21" r="1.300" fill="#ffd83c" /><ellipse cx="17" cy="27" rx="7" ry="4.500" fill="#dfe3e8" stroke="#8b929b" /></svg></button>
      <button class="t-run stacked hot" aria-label="Microsoft Excel"><svg width="34" height="34" viewBox="0 0 34 34"><path d="M3 28V13Q4 3 16 2h10v26z" fill="#e7f6df" stroke="#56a63c" stroke-width="1.500" /><path d="M10 10h21l-2 20H12z" fill="#fff" stroke="#5b9b4c" /><path d="M23 13h6v4h-6zM22 19h7v4h-7zM14 25h6v4h-6zM22 25h6v4h-6z" fill="#77b868" /><path d="M8 10h5l3 5 4-5h4l-6 7 5 7h-5l-3-5-4 5H7l6-7z" fill="#23682a" /></svg></button>
      <div class="tray">
        <svg width="9" height="5" viewBox="0 0 9 5"><path d="M0 5h9L4.500 0z" fill="#fff" /></svg>
        <svg width="16" height="16" viewBox="0 0 16 16"><path d="M1.500 1v15" stroke="#fff" stroke-width="2" /><path d="M3 2q4-1 5 1t6 0v7q-4 1-6-1t-5-1z" fill="#fff" stroke="#444" stroke-width=".5" /><circle cx="11" cy="11" r="4.500" fill="#e03a2c" /><path d="M9 9l4 4M13 9l-4 4" stroke="#fff" stroke-width="1.500" /></svg>
        <svg width="16" height="16" viewBox="0 0 16 16"><path d="M5.500 4.500h9v7h-9z" fill="#5d7085" stroke="#fff" /><path d="M7 14.500h6M10 12v2M2.500 6v6q0 2 3 2M1 1v2M4 1v2M.5 3.500h4v2h-4z" fill="none" stroke="#fff" /></svg>
        <svg width="16" height="16" viewBox="0 0 16 16"><path d="M1 6h2l4-4v12l-4-4H1z" fill="#fff" stroke="#444" stroke-width=".5" /><path d="M9 5.500q1.500 2.500 0 5M11.500 4q2.500 4 0 8M14 2.500q3 5.500 0 11" fill="none" stroke="#fff" /></svg>
        <div class="clock"><span>5:45 PM</span><span>8/7/2017</span></div>
      </div>
      <button class="showdesk" aria-label="Show desktop"></button>
    </nav>
  </div>
</template>

<style>
html,
body {
  margin: 0;
  background: #bfdbff;
}
</style>

<style scoped>
.app {
  display: flex;
  flex-direction: column;
  height: 100vh;
  overflow: hidden;
  font-family: 'Open Sans', 'Noto Sans', sans-serif;
  font-size: 11px;
  color: #15428b;
}
.app * {
  box-sizing: border-box;
}
button {
  font: inherit;
  color: inherit;
  background: none;
  border: 0;
  padding: 0;
  margin: 0;
  display: flex;
  align-items: center;
  justify-content: center;
}
svg {
  display: block;
  flex: none;
}

/* Title bar */
.titlebar {
  position: relative;
  flex: 0 0 26px;
  display: flex;
  align-items: flex-start;
  border-bottom: 1px solid #4b6078;
  background:
    radial-gradient(ellipse 40px 9px at 243px 15px, rgba(70, 95, 125, 0.4), transparent),
    radial-gradient(ellipse 12px 9px at 192px 15px, rgba(50, 90, 140, 0.5), transparent),
    radial-gradient(ellipse 20px 9px at 372px 15px, rgba(90, 110, 135, 0.4), transparent),
    radial-gradient(ellipse 9px 9px at 926px 15px, rgba(40, 50, 130, 0.9), transparent),
    radial-gradient(ellipse 70px 9px at 1000px 15px, rgba(60, 95, 140, 0.5), transparent),
    linear-gradient(90deg, #8fb4cf 0, #97b9d6 14%, #8fb2d4 60%, #9fc6ea 75%, #98cdf4 88%, #8ec6f0 100%);
}
.qat {
  display: flex;
  align-items: center;
  gap: 6px;
  height: 22px;
  margin: 2px 0 0 36px;
  padding: 0 8px 0 16px;
  border: 1px solid #5b7591;
  border-left: 0;
  border-radius: 0 11px 11px 0;
  background: rgba(190, 214, 238, 0.45);
}
.qat .tri {
  margin-right: 2px;
}
.qat-more {
  width: 23px;
  height: 24px;
}
h1 {
  flex: 1;
  margin: 0;
  padding-right: 66px;
  font-size: 11px;
  line-height: 25px;
  font-weight: 400;
  color: #000;
  text-align: center;
  white-space: nowrap;
}
.winbtns {
  display: flex;
  height: 18px;
  margin-right: 3px;
  border: 1px solid #39465a;
  border-top: 0;
  border-radius: 0 0 5px 5px;
  overflow: hidden;
  background: linear-gradient(#dbe6f2, #b7c8dc 45%, #8fa6c0 50%, #b9cfe6);
}
.winbtns button {
  width: 28px;
  border-right: 1px solid #56657a;
}
.winbtns .close {
  width: 46px;
  border: 0;
  background: linear-gradient(#e9a698, #d5604a 45%, #bd2c14 50%, #e0714e);
}
.orb {
  position: absolute;
  left: 3px;
  top: 4px;
  width: 37px;
  height: 37px;
  border-radius: 50%;
  border: 1px solid #7a8ba3;
  background: radial-gradient(circle at 50% 30%, #fff 0, #e4e9f0 45%, #a9b4c4 80%, #f5f8fb 100%);
  box-shadow: 0 1px 2px #556;
}

/* Tabs */
.tabs {
  flex: 0 0 23px;
  display: flex;
  align-items: flex-end;
  gap: 4px;
  padding: 0 6px 0 48px;
  background: #bfdbff;
}
.tabs > button {
  height: 22px;
  padding: 0 11px;
  border: 1px solid transparent;
  border-bottom: 0;
  white-space: nowrap;
}
.tabs > .active {
  background: linear-gradient(#f4f9ff, #e3edf8);
  border-color: #8db2e3;
  border-radius: 3px 3px 0 0;
}
.mdi {
  display: flex;
  align-items: center;
  gap: 14px;
  margin: 0 0 5px auto;
}

/* Ribbon */
.ribbon {
  flex: 0 0 91px;
  display: flex;
  gap: 3px;
  margin: 0 1px;
  padding: 2px 1px;
  border: 1px solid #8db2e3;
  border-bottom-color: #a5f0fb;
  border-radius: 3px;
  background: linear-gradient(#dbe6f4 0, #cfddef 18%, #c7d8ed 20%, #dcebf9 80%, #e3f5ff);
}
.group {
  display: flex;
  flex-direction: column;
  flex: none;
  border: 1px solid #9fbde0;
  border-radius: 3px;
  background: linear-gradient(#dee8f5 0, #d1dff0 17%, #c7d8ed 19%, #d8e8f5 100%);
  box-shadow: inset 0 0 0 1px rgba(255, 255, 255, 0.35);
}
.g-clip { width: 151px; }
.g-font { width: 196px; }
.g-align { width: 251px; }
.g-num { width: 136px; }
.g-styles { width: 174px; }
.g-cells { width: 134px; }
.g-edit { width: 176px; }
.gbody {
  flex: 1;
  display: flex;
  min-height: 0;
  padding: 0 3px;
}
.gbody.snug {
  padding: 0 2px;
}
.gbody.rows2 {
  flex-direction: column;
  gap: 8px;
  padding-top: 9px;
}
.glabel {
  flex: 0 0 15px;
  display: flex;
  align-items: center;
  background: #c1d8f0;
  color: #3e6aaa;
  padding: 0 5px;
}
.glabel span {
  flex: 1;
  text-align: center;
  line-height: 14px;
}
.dd {
  display: inline-block;
  flex: none;
  width: 0;
  height: 0;
  border: 3px solid transparent;
  border-top-color: #567db1;
  border-bottom: 0;
  vertical-align: middle;
  margin-left: 3px;
}
.big {
  flex-direction: column;
  justify-content: flex-start;
  padding-top: 4px;
  line-height: 13px;
  white-space: nowrap;
}
.big svg {
  margin-bottom: 3px;
}
.big > .dd {
  margin: 5px 0 0;
}
.paste { width: 42px; }
.b68 { width: 68px; }
.b54 { width: 55px; }
.b44 { width: 43px; }
.b42 { width: 42px; }
.stack {
  display: flex;
  flex-direction: column;
  padding: 1px 0 0 3px;
}
.stack.edit {
  width: 82px;
}
.small {
  height: 22px;
  gap: 4px;
  justify-content: flex-start;
  white-space: nowrap;
}
.line {
  display: flex;
  gap: 3px;
}
.spread {
  justify-content: space-between;
}
.push {
  margin-left: auto;
}
.bar {
  display: flex;
  height: 21px;
  border: 1px solid #9dbbe2;
  border-radius: 2px;
  background: linear-gradient(#d8e5f5, #c6d8ee 48%, #bcd1ec 50%, #d0e2f6);
}
.bar button + button {
  border-left: 1px solid #a9c3e6;
}
.bar .on {
  background: linear-gradient(#fbd192, #f9b257 45%, #fda23e 50%, #fde28d);
}
.w22 { width: 22px; }
.w23 { width: 23px; }
.w31 { width: 31px; }
.w34 { width: 33px; }
.serif {
  font-family: 'Liberation Serif', serif;
  color: #222;
  line-height: 16px;
}
.s12 { font-size: 12px; }
.s13 { font-size: 13px; color: #222; }
.s14 { font-size: 15px; }
.s16 { font-size: 16px; }
.s18 { font-size: 20px; line-height: 8px; padding-bottom: 7px; }
.sup {
  align-self: flex-start;
  margin-top: 4px;
}
.combo {
  position: relative;
  display: flex;
  align-items: center;
  height: 21px;
}
.combo select {
  appearance: none;
  width: 100%;
  height: 21px;
  padding: 0 3px;
  border: 1px solid #abc1de;
  border-radius: 0;
  background: #e6effa;
  font: inherit;
  color: #000;
}
.combo .dd {
  position: absolute;
  right: 5px;
  top: 9px;
}
.c-font { width: 97px; margin-right: -3px; }
.c-size { width: 43px; }
.half {
  display: flex;
  flex-direction: column;
  gap: 8px;
  padding-top: 9px;
}
.half.wide {
  padding-left: 6px;
  gap: 7px;
}
.half.wide .small {
  gap: 3px;
}
.vsep {
  width: 1px;
  margin: 6px 0 6px 5px;
  background: #9fbde0;
}

/* Formula bar */
.formula {
  flex: 0 0 27px;
  display: flex;
  align-items: stretch;
  padding-top: 2px;
  padding-bottom: 3px;
  background: #c6dbf6;
  color: #000;
}
.formula > * {
  border: 0 solid #6b90bb;
  border-width: 1px 0;
}
.namebox {
  width: 159px;
  background: #fff;
  font-size: 12px;
  padding: 0 6px 0 0;
}
.namebox span {
  flex: 1;
  padding-right: 6px;
  text-align: center;
}
.fx {
  width: 85px;
  display: flex;
  align-items: center;
  justify-content: space-between;
  padding: 0 7px;
  border-right-width: 1px;
  border-left-width: 1px;
  border-radius: 10px 0 0 10px;
  background: linear-gradient(#e8f0fa, #b4cbea);
}
.knob {
  width: 8px;
  height: 8px;
  border-radius: 50%;
  background: #b9bfca;
}
.fx em {
  font-family: 'Liberation Serif', serif;
  font-weight: 700;
  font-size: 14px;
  line-height: 16px;
  color: #333;
}
.fx small {
  font-size: 10px;
}
.formula input {
  flex: 1;
  min-width: 0;
  padding: 0 7px;
  background: #fff;
  font: inherit;
  font-size: 12px;
  color: #000;
  outline: none;
}
.formula .expand {
  width: 16px;
  border-left-width: 1px;
  background: linear-gradient(#e3eefb, #bcd2ee);
}

/* Worksheet */
.workspace {
  flex: 1;
  display: flex;
  min-height: 0;
  border-top: 1px solid #6b90bb;
}
.sheet {
  flex: 1;
  min-width: 0;
  overflow: hidden;
  background: #fff;
  font-family: 'Liberation Sans', Arial, sans-serif;
  color: #000;
}
table {
  width: 100%;
  table-layout: fixed;
  border-collapse: separate;
  border-spacing: 0;
}
.k-hdr { width: 16px; }
.k-a { width: 6px; }
.k-b { width: 96px; }
.k-c { width: 134px; }
.k-day { width: 33px; }
.k-aj { width: 7px; }
.k-sum { width: 23px; }
.letters { height: 9px; }
.h11 { height: 11px; }
.h12 { height: 12px; }
.h14 { height: 14px; }
.h16 { height: 16px; }
.h17 { height: 17px; }
.h18 { height: 18px; }
.gap { height: 4px; }
td,
th {
  padding: 0;
  border: 0 solid #000;
  white-space: nowrap;
  text-align: center;
  font-weight: 400;
  font-size: 10px;
  line-height: 10px;
}
th {
  background: #e4ecf7;
  border: 0 solid #9eb6ce;
  border-width: 0 1px 1px 0;
  font-size: 6px;
  line-height: 7px;
  font-weight: 700;
  vertical-align: bottom;
  color: #1b2a3c;
}
.letters th {
  background: linear-gradient(#f6f9fc, #d6dde7);
  vertical-align: middle;
}
.letters .corner {
  background: #a9c4e9;
}
.letters .hot {
  background: linear-gradient(#fbdc9d, #f4b65a);
  border-color: #f29536;
}
tbody .hot {
  background: #ffd58d;
  border-color: #f29536;
}
.bl { border-bottom-width: 1px; }
.br { border-right-width: 1px; }
.frz,
.letters .frz {
  border-right: 1px solid #666;
}
.freeze > td,
.freeze > th,
td.cut {
  border-bottom: 1px solid #666;
}
.title {
  font-size: 13px;
  line-height: 13px;
  font-weight: 700;
  text-align: left;
  padding-left: 7px;
}
.periode {
  font-size: 11px;
  font-weight: 700;
  text-align: right;
  padding-right: 6px;
}
.month {
  font-size: 9px;
  text-align: left;
  padding-left: 8px;
  background: #fcd5b4;
}
.head {
  font-size: 8px;
  background: #808080;
}
.date {
  font-size: 9px;
}
.note {
  font-size: 8px;
}
.rakor { background: #ff0; }
.ph { background: #f00; }
.tag { background: #92cddc; }
.day {
  font-size: 12px;
  line-height: 12px;
}
.weekend {
  background: #f60;
  color: #fff;
}
.sumhead {
  font-size: 8px;
  color: #fff;
}
.green { background: #0c0; }
.azure { background: #00b0f0; }
.navy { background: #376092; }
.name {
  font-size: 12px;
  line-height: 14px;
  text-align: left;
  padding-left: 7px;
}
.blue { background: #92cddc; }
.peach { background: #fcd5b4; }
.light { background: #fce9da; }
.dept {
  font-size: 8px;
  line-height: 11px;
  padding: 0 6px;
  white-space: normal;
}
.dept.dotted { border-bottom: 1px dotted #000; }
.dept.solid { border-bottom: 1px solid #000; }
.shift {
  line-height: 14px;
}
.off { background: #f00; color: #fff; }
.sod { background: #376092; color: #fff; }
.asod { background: #3cf; color: #fff; }
.pod { background: #0c0; color: #fff; }
.fill-green { background: #ebf1de; }
.fill-light { background: #fce9da; }
.low { line-height: 11px; vertical-align: bottom; }
.red { color: #f00; }
.sel { position: relative; }
.cursor {
  position: absolute;
  inset: -3px -3px -3px -2px;
  border: 1px solid #000;
}
.cursor::before {
  content: '';
  position: absolute;
  inset: 0;
  border: 1px solid #fff;
  outline: 1px solid #000;
  outline-offset: -2px;
}
.cursor::after {
  content: '';
  position: absolute;
  right: -3px;
  bottom: -3px;
  width: 6px;
  height: 6px;
  background: #000;
  border: 1px solid #fff;
}
.spill span {
  display: block;
  width: 6px;
  overflow: hidden;
}
.gap th {
  font-size: 4px;
  line-height: 3px;
}
.gap th span {
  display: block;
  height: 3px;
  overflow: hidden;
}
.gap td {
  font-size: 1px;
  line-height: 1px;
}
.dot {
  border-right: 1px dotted #000;
  border-bottom: 1px dotted #000;
  line-height: 14px;
}

/* Scroll bars */
.vscroll {
  flex: 0 0 16px;
  display: flex;
  flex-direction: column;
  background: linear-gradient(90deg, #9dbbe4, #7394c0 30%, #7d9cc6);
}
.vscroll button {
  height: 18px;
}
.vtrack {
  flex: 1;
  padding: 21px 0 0 2px;
}
.vthumb {
  width: 13px;
  height: 31%;
  border: 1px solid #5f7ba6;
  border-radius: 2px;
  background:
    repeating-linear-gradient(#8795aa 0 1px, transparent 1px 3px) center / 7px 8px no-repeat,
    linear-gradient(90deg, #f7f9fc, #dfe5ee 50%, #c5d0e0);
}
.sheetbar {
  flex: 0 0 17px;
  display: flex;
  align-items: stretch;
  background: #9ab6de;
  border-bottom: 2px solid #87a6d3;
}
.navs {
  width: 63px;
  display: flex;
  justify-content: space-around;
  padding: 0 2px;
  background: #c6dcf8;
  fill: #15428b;
}
.sheettab {
  padding: 0 5px 0 9px;
  background: linear-gradient(#fff, #e6f0fc);
}
.sheettab span {
  font-size: 13px;
  line-height: 15px;
  font-weight: 700;
  white-space: nowrap;
}
.newtab {
  margin-left: -1px;
}
.fillbar {
  flex: 1;
}
.hscroll {
  width: 422px;
  margin-right: 16px;
  display: flex;
  align-items: stretch;
  background: #7898c6;
}
.hscroll button {
  width: 18px;
}
.split {
  width: 6px;
  border: 2px solid #fff;
  background: #5b7fb5;
}
.htrack {
  flex: 1;
  padding-left: 6px;
}
.hthumb {
  width: 53px;
  height: 15px;
  border: 1px solid #5f7ba6;
  border-radius: 2px;
  background:
    repeating-linear-gradient(90deg, #8795aa 0 1px, transparent 1px 2px) center / 8px 7px no-repeat,
    linear-gradient(#f7f9fc, #dfe5ee 50%, #bcc9dc);
}

/* Status bar */
.status {
  flex: 0 0 21px;
  display: flex;
  align-items: stretch;
  border-bottom: 1px solid #5c7190;
  background: linear-gradient(#d9e8fb, #c3daf9 40%, #b0cdf5 50%, #cfe3fb);
}
.ready {
  width: 47px;
  padding-left: 7px;
  line-height: 20px;
  border-right: 1px solid #92b2dc;
}
.statusfill {
  flex: 1;
}
.zoombox {
  width: 239px;
  display: flex;
  align-items: center;
  border-left: 1px solid #f0f6ff;
  padding: 0 4px;
  background: linear-gradient(#bcd3f2, #a2c0ea 45%, #85a9de 50%, #a6c4ec);
}
.views {
  display: flex;
  height: 18px;
  border: 1px solid #7c9dcf;
  border-radius: 2px;
  background: #c6daf5;
}
.views button {
  width: 18px;
}
.views .on {
  background: linear-gradient(#fbe3b5, #fbc55c);
}
.pct {
  margin: 0 8px;
}
.zoombox input {
  flex: 1;
  min-width: 0;
  height: 16px;
  margin: 0 2px;
  appearance: none;
  background:
    linear-gradient(#fff, #fff) center / 1px 7px no-repeat,
    linear-gradient(#e8f1fc, #e8f1fc) center / 100% 1px no-repeat;
}
.zoombox input::-webkit-slider-thumb {
  appearance: none;
  width: 9px;
  height: 13px;
  border: 1px solid #4d6792;
  border-radius: 1px 1px 5px 5px;
  background: #e3ecf8;
}

/* Taskbar */
.taskbar {
  flex: 0 0 40px;
  display: flex;
  align-items: stretch;
  background: linear-gradient(90deg, #58768f 0, #7894b0 5%, #8da9c7 20%, #8ba6c4 83%, #6d8399 88%, #65798e);
}
.t-start {
  width: 54px;
}
.t-plain {
  width: 62px;
}
.t-start + .t-plain {
  width: 68px;
}
.t-run {
  width: 60px;
  margin-right: 2px;
  border: 1px solid #4a5f78;
  border-radius: 3px;
  background: linear-gradient(150deg, #cbd9e8, #a4bad2 50%, #93adc9);
  box-shadow: inset 0 0 0 1px rgba(255, 255, 255, 0.5);
}
.t-run.stacked {
  width: 55px;
  margin-right: 6px;
  box-shadow: inset 0 0 0 1px rgba(255, 255, 255, 0.5), 3px 0 0 #a4bad2, 4px 0 0 #4a5f78;
}
.t-run.hot {
  background: linear-gradient(150deg, #fff, #dbe6f1 50%, #bfd0e2);
}
.tray {
  margin-left: auto;
  display: flex;
  align-items: center;
  gap: 8px;
}
.tray > svg:first-child {
  margin-right: 4px;
}
.clock {
  width: 68px;
  display: flex;
  flex-direction: column;
  align-items: center;
  line-height: 17px;
  color: #fff;
}
.showdesk {
  width: 15px;
  margin-left: 2px;
  border: 1px solid #3c4f63;
  background: linear-gradient(135deg, #8496a8, #53677d);
}
</style>
